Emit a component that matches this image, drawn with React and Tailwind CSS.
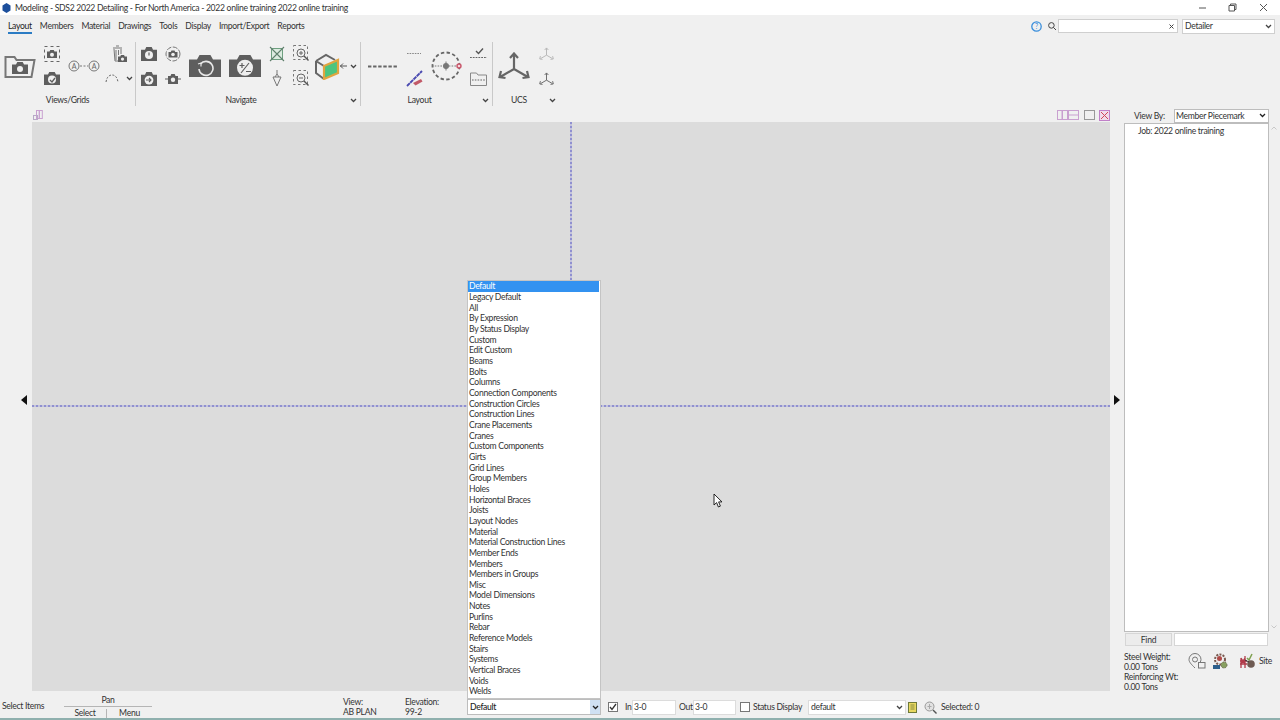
import React from "react";

const G = "#5e5e5e";
const items = ["Default","Legacy Default","All","By Expression","By Status Display","Custom","Edit Custom","Beams","Bolts","Columns","Connection Components","Construction Circles","Construction Lines","Crane Placements","Cranes","Custom Components","Girts","Grid Lines","Group Members","Holes","Horizontal Braces","Joists","Layout Nodes","Material","Material Construction Lines","Member Ends","Members","Members in Groups","Misc","Model Dimensions","Notes","Purlins","Rebar","Reference Models","Stairs","Systems","Vertical Braces","Voids","Welds"];
const tabs = ["Members","Material","Drawings","Tools","Display","Import/Export","Reports"];

const S = ({ w, h, children, className = "" }) => (
  <svg width={w} height={h} viewBox={`0 0 ${w} ${h}`} className={`block shrink-0 ${className}`} fill="none">{children}</svg>
);
const Chev = ({ c = "#444" }) => (
  <S w={7} h={5}><path d="M1 1l2.5 2.5L6 1" stroke={c} strokeWidth="1.3" /></S>
);
const CamBody = ({ x = 0, y = 0, w = 16, h = 12, r = 3, inner = "#f0f0f0" }) => (
  <g>
    <path d={`M${x} ${y + h * .2}h${w * .25}l${w * .08} ${-h * .2}h${w * .34}l${w * .08} ${h * .2}h${w * .25}v${h * .8}h${-w}z`} fill={G} />
    {inner && <circle cx={x + w / 2} cy={y + h * .58} r={r} fill={inner} />}
  </g>
);
const FolderCam = () => (
  <S w={32} h={26}>
    <path d="M1.5 24V4h9l2 3h18l-3 17z" stroke="#777" strokeWidth="2" fill="#f0f0f0" />
    <CamBody x={8} y={9} w={16} h={12} r={3} />
  </S>
);
const DashBox = ({ w = 16, h = 16 }) => <rect x=".5" y=".5" width={w - 1} height={h - 1} stroke="#666" strokeDasharray="3 3" />;
const DashCam = () => (
  <S w={16} h={16}><DashBox /><CamBody x={3} y={4} w={10} h={8} r={2} /></S>
);
const CheckCam = () => (
  <S w={16} h={13}><CamBody w={16} h={13} r={4} /><path d="M6 8l2 2 3-4" stroke={G} strokeWidth="1.3" /></S>
);
const AA = () => (
  <S w={32} h={12}>
    <circle cx="6" cy="6" r="5" stroke="#777" />
    <circle cx="26" cy="6" r="5" stroke="#777" />
    <path d="M12 6h8" stroke="#777" strokeDasharray="2 1.5" />
    <text x="6" y="8.5" textAnchor="middle" fontSize="7" fill="#666">A</text>
    <text x="26" y="8.5" textAnchor="middle" fontSize="7" fill="#666">A</text>
  </S>
);
const TrashCam = () => (
  <S w={16} h={18}>
    <path d="M2 3h9M5 1h3M3 4l1 12h3M10 4v5M5 5v10M7.5 5v5" stroke="#777" />
    <CamBody x={7} y={10} w={9} h={7} r={1.6} />
  </S>
);
const Curve = () => (
  <S w={14} h={9}><path d="M1 8C2 2 5 1 7 1s5 1 6 7" stroke="#666" strokeDasharray="2 1.5" /></S>
);
const TimerCam = () => (
  <S w={16} h={14}><CamBody w={16} h={14} r={4} /><path d="M8 5.5v3" stroke={G} strokeWidth="1.2" /></S>
);
const RingCam = () => (
  <S w={16} h={16}>
    <circle cx="8" cy="8" r="7" stroke="#777" strokeDasharray="5 1.5" />
    <CamBody x={3.5} y={4.5} w={9} h={7} r={1.8} />
  </S>
);
const ArrowCam = () => (
  <S w={16} h={14}><CamBody w={16} h={14} r={4.4} /><path d="M5 8h5M8 6l2 2-2 2" stroke={G} strokeWidth="1.1" /></S>
);
const SmallCam = () => (
  <S w={16} h={10}>
    <path d="M0 5h3M13 5h3" stroke={G} strokeWidth="1.2" />
    <CamBody x={3} y={0} w={10} h={10} r={2.2} />
  </S>
);
const BigCamR = () => (
  <S w={32} h={22}>
    <CamBody w={32} h={22} inner={null} />
    <path d="M11.5 9a7 7 0 1 1-1.5 5" stroke="#e8e8e8" strokeWidth="1.6" />
    <path d="M9 9l3-1v3.4" stroke="#e8e8e8" strokeWidth="1.2" />
  </S>
);
const BigCamP = () => (
  <S w={32} h={22}>
    <CamBody w={32} h={22} r={8} inner="#eeeeee" />
    <path d="M10.5 10.5h5M13 8v5M17 16.500h5M12 18l8-10" stroke={G} strokeWidth="1.2" />
  </S>
);
const GreenX = () => (
  <S w={16} h={16}>
    <rect x="2.5" y="2.5" width="11" height="11" stroke="#6d9f7f" fill="#dcebe0" />
    <path d="M1 1l14 14M15 1L1 15" stroke="#5f7f6c" strokeWidth="1.1" />
  </S>
);
const Plumb = () => (
  <S w={10} h={17}><path d="M5 0v4M1 7h8L5 16zM3 7l2-3 2 3" stroke="#777" /></S>
);
const Zoom = ({ plus }) => (
  <S w={17} h={17}>
    <rect x=".5" y=".5" width="14" height="14" stroke="#777" strokeDasharray="2.5 2.5" />
    <circle cx="8" cy="8" r="4" stroke="#666" fill="#f0f0f0" />
    <path d="M11 11l4.500 4.500" stroke="#555" strokeWidth="1.4" />
    <path d={plus ? "M6 8h4M8 6v4" : "M6 8h4"} stroke="#666" />
  </S>
);
const Cube = () => (
  <S w={26} h={27}>
    <path d="M2 8L12 2l9 5M2 8v12l8 6M2 8l8 5" stroke="#666" strokeWidth="2" />
    <path d="M10 13l14-6v13l-14 6z" fill="#4cc57f" stroke="#e0a540" strokeWidth="2.2" />
  </S>
);
const Dashes = () => <S w={29} h={3}><path d="M0 1.500h29" stroke="#666" strokeWidth="2.200" strokeDasharray="3.400 1.700" /></S>;
const ShortDash = () => <S w={14} h={3}><path d="M0 1.500h14" stroke="#888" strokeWidth="1.100" strokeDasharray="1.600 1" /></S>;
const Pencil = () => (
  <S w={17} h={17}>
    <path d="M1 16L16 1" stroke="#4a4ab0" strokeWidth="1.900" strokeDasharray="4 .6" />
    <path d="M7 13l8-4 1.500 2.500-7 4z" fill="#c25a68" />
  </S>
);
const Circle = () => (
  <S w={32} h={30}>
    <circle cx="15" cy="15" r="13.500" stroke="#666" strokeWidth="1.800" strokeDasharray="3.400 2.400" />
    <path d="M1 15h26" stroke="#777" strokeDasharray="1.600 1.200" />
    <circle cx="15" cy="15" r="3" fill="#777" />
    <path d="M15 10.500v9" stroke="#777" />
    <circle cx="28" cy="15" r="2" stroke="#c9566a" strokeWidth="1.400" fill="#f5d8de" />
  </S>
);
const CheckDash = () => (
  <S w={17} h={13}>
    <path d="M6 4l2.500 2.500L13 1.500" stroke="#555" strokeWidth="1.400" />
    <path d="M0 10.500h17" stroke="#666" strokeWidth="1.100" strokeDasharray="1.800 1" />
  </S>
);
const FolderDash = () => (
  <S w={17} h={14}>
    <path d="M.5 13.500V1h6l1.500 2h8.500v10.500z" stroke="#888" />
    <path d="M2 8h13" stroke="#666" strokeDasharray="1.600 1.200" />
  </S>
);
const Axes = ({ w = 32, h = 29, c = "#666", sw = 2.2 }) => (
  <svg width={w} height={h} viewBox="0 0 32 29" className="block shrink-0" fill="none">
    <path d="M16 17V2M16 17L3 24.500M16 17l13 7.500M12 6l4-4.500L20 6M3 19l-1.500 6 6 1M29 19l1.500 6-6 1" stroke={c} strokeWidth={sw} />
  </svg>
);
const Col = ({ w, ml, children }) => (
  <div className={`flex flex-col items-center justify-between h-[43px] ${w} ${ml}`}>
    {React.Children.map(children, (c) => <div className="h-[18px] flex items-center">{c}</div>)}
  </div>
);
const Sep = () => <div className="w-px h-[64px] bg-[#c9c9c9] mt-[5px] shrink-0" />;
const Group = ({ w, label, chev, pad = "", children }) => (
  <div className={`flex flex-col shrink-0 ${w}`}>
    <div className={`flex items-center h-[44px] mt-[7px] ${pad}`}>{children}</div>
    <div className="flex items-center h-[14px] mt-[5px]">
      <div className="flex-1 text-center">{label}</div>
      {chev && <div className="w-[14px] flex justify-center"><Chev /></div>}
    </div>
  </div>
);
const Check = ({ on }) => (
  <div className="w-[10px] h-[10px] border border-[#777] bg-white flex items-center justify-center shrink-0">
    {on && <S w={8} h={8}><path d="M1 4l2 2.500L7 1" stroke="#333" strokeWidth="1.300" /></S>}
  </div>
);
const ViewSwitch = () => (
  <div className="flex items-center">
    <S w={11} h={10}><rect x=".5" y=".5" width="4.500" height="9" stroke="#c9a0d0" /><rect x="5.500" y=".5" width="5" height="9" stroke="#c9a0d0" /></S>
    <S w={11} h={10}><rect x=".5" y=".5" width="10" height="9" stroke="#c9a0d0" /><path d="M0 5h11" stroke="#c9a0d0" /></S>
    <S w={11} h={10} className="ml-[5px]"><rect x=".5" y=".5" width="10" height="9" stroke="#999" /></S>
    <S w={11} h={11} className="ml-[4px]"><rect x=".5" y=".5" width="10" height="10" stroke="#c080c8" fill="#f0dcec" /><path d="M2 2l7 7M9 2l-7 7" stroke="#d04858" /></S>
  </div>
);
const Tri = ({ right }) => (
  <S w={6} h={10}><path d={right ? "M0 0l6 5-6 5z" : "M6 0L0 5l6 5z"} fill="#111" /></S>
);
const PinBox = () => (
  <S w={18} h={17}>
    <path d="M7 15C3 11 1 9 1 6.500a6 6 0 0 1 12 0c0 1-.3 2-1 3" stroke="#777" />
    <circle cx="7" cy="6.500" r="2.500" stroke="#777" />
    <rect x="10.500" y="9.500" width="6.500" height="5.500" stroke="#777" fill="#f0f0f0" />
  </S>
);
const GearPerson = () => (
  <S w={16} h={17}>
    <circle cx="8" cy="6.500" r="5" stroke="#7a5a50" strokeWidth="2" strokeDasharray="2 1.200" />
    <circle cx="7.500" cy="5.500" r="2.500" fill="#b04a48" />
    <path d="M1 16v-4h7v4z" fill="#2d5f8c" />
    <circle cx="12" cy="12" r="3" fill="#88a060" stroke="#6a6a50" strokeDasharray="1.500 1" />
  </S>
);
const SiteIcon = () => (
  <S w={17} h={17}>
    <path d="M2 15V5M6 15V3M1 8h7M1 11h7M2 5l4 6M6 5l-4 6" stroke="#b03a4a" strokeWidth="1.300" />
    <path d="M8 5l2 2 3-6" stroke="#7ea050" strokeWidth="1.500" />
    <circle cx="12" cy="11" r="3.800" fill="#6e5a52" />
    <path d="M6 7l4 2" stroke="#333" />
  </S>
);

export default function App() {
  return (
    <div className="relative w-[1280px] h-[720px] overflow-hidden flex flex-col bg-[#f0f0f0] text-[#333] text-[8.600px] tracking-[-0.3px] leading-none font-['Lato',sans-serif]">
      {/* title bar */}
      <div className="h-[15px] shrink-0 bg-white flex items-center">
        <S w={9} h={10} className="ml-[2px]"><path d="M4.500 0l4 2.400v5L4.500 10 .5 7.400v-5z" fill="#1c4f9c" /></S>
        <div className="ml-[4px] pt-[2px] text-[#333]">Modeling - SDS2 2022 Detailing - For North America - 2022 online training 2022 online training</div>
        <div className="ml-auto flex items-center">
          <S w={9} h={9}><path d="M1 5h7" stroke="#555" /></S>
          <S w={9} h={9} className="ml-[21px]"><path d="M2.500 2.500V1h5.500v5.500H6.500M1 2.500h5.500V8H1z" stroke="#555" /></S>
          <S w={9} h={9} className="ml-[22px] mr-[12px]"><path d="M1 1l7 7M8 1L1 8" stroke="#555" /></S>
        </div>
      </div>
      {/* tabs */}
      <div className="h-[22px] shrink-0 flex items-center">
        <div className="ml-[8px] flex items-center gap-[8px] h-full">
          <div className="relative h-full flex items-center pt-px text-[#222]">
            Layout
            <div className="absolute left-0 right-0 bottom-[3px] h-[2px] bg-[#2b7cc4]" />
          </div>
          {tabs.map((t) => <div key={t} className="pt-px">{t}</div>)}
        </div>
        <div className="ml-auto flex items-center">
          <S w={11} h={11} className="mr-[6px]"><circle cx="5.500" cy="5.500" r="4.700" stroke="#3a8edb" strokeWidth="1.300" /><text x="5.500" y="8" textAnchor="middle" fontSize="7" fill="#3a8edb">?</text></S>
          <S w={8} h={8} className="mr-[2px]"><circle cx="3.400" cy="3.400" r="2.800" stroke="#444" /><path d="M5.500 5.500L8 8" stroke="#444" /></S>
          <div className="w-[120px] h-[14px] bg-white border border-[#cfcfcf] flex items-center justify-end pr-[3px]">
            <S w={5} h={5}><path d="M.5.5l4 4M4.500.5l-4 4" stroke="#444" /></S>
          </div>
          <div className="w-[93px] h-[15px] ml-[4px] mr-[5px] bg-white border border-[#cfcfcf] flex items-center justify-between pl-[2px] pr-[2px]">
            <span className="pt-px">Detailer</span><Chev />
          </div>
        </div>
      </div>
      {/* ribbon */}
      <div className="h-[71px] shrink-0 flex">
        <Group w="w-[135px]" label="Views/Grids" pad="pl-[4px]">
          <FolderCam />
          <Col w="w-[16px]" ml="ml-[8px]"><DashCam /><CheckCam /></Col>
          <div className="ml-[8px]"><AA /></div>
          <Col w="w-[26px]" ml="ml-[6px]">
            <TrashCam />
            <div className="flex items-center gap-[7px]"><Curve /><Chev /></div>
          </Col>
        </Group>
        <Sep />
        <Group w="w-[224px]" label="Navigate" chev pad="pl-[5px]">
          <Col w="w-[16px]" ml=""><TimerCam /><ArrowCam /></Col>
          <Col w="w-[16px]" ml="ml-[8px]"><RingCam /><SmallCam /></Col>
          <div className="ml-[8px]"><BigCamR /></div>
          <div className="ml-[8px]"><BigCamP /></div>
          <Col w="w-[16px]" ml="ml-[8px]"><GreenX /><Plumb /></Col>
          <Col w="w-[17px]" ml="ml-[8px]"><Zoom plus /><Zoom /></Col>
          <div className="ml-[4px]"><Cube /></div>
          <S w={7} h={6}><path d="M0 3h7M3 .5L.5 3 3 5.500" stroke="#555" /></S>
          <div className="ml-[3px]"><Chev /></div>
        </Group>
        <Sep />
        <Group w="w-[131px]" label="Layout" chev pad="pl-[7px]">
          <Dashes />
          <Col w="w-[22px]" ml="ml-[6px]"><ShortDash /><Pencil /></Col>
          <div className="ml-[6px]"><Circle /></div>
          <Col w="w-[18px]" ml="ml-[6px]"><CheckDash /><FolderDash /></Col>
        </Group>
        <Sep />
        <Group w="w-[66px]" label="UCS" chev pad="pl-[5px]">
          <Axes />
          <Col w="w-[16px]" ml="ml-[8px]">
            <Axes w={15} h={14} c="#b5b5b5" sw={2} />
            <Axes w={15} h={14} c="#666" sw={2} />
          </Col>
        </Group>
      </div>
      {/* work area */}
      <div className="flex-1 min-h-0 flex">
        <div className="w-[32px] shrink-0 flex items-center justify-end pr-[5px]"><Tri /></div>
        <div className="w-[1078px] shrink-0 flex flex-col">
          <div className="h-[14px] shrink-0 flex items-center justify-between">
            <S w={10} h={10} className="ml-px"><rect x="3.500" y=".5" width="2.800" height="8" stroke="#c9a0d0" /><rect x="6.300" y=".5" width="3" height="8" stroke="#c9a0d0" /><rect x=".5" y="5.500" width="4" height="4" stroke="#b8a8c8" /></S>
            <ViewSwitch />
          </div>
          <div className="relative flex-1 bg-[#dcdcdc]">
            <div className="absolute left-0 right-0 top-[283px] h-[2px] bg-[repeating-linear-gradient(90deg,#9090d0_0,#9090d0_2px,#c4c4dc_2px,#c4c4dc_4px)]" />
            <div className="absolute top-0 h-[283px] left-[538px] w-[2px] bg-[repeating-linear-gradient(180deg,#9090d0_0,#9090d0_2px,#c4c4dc_2px,#c4c4dc_4px)]" />
            <svg width="12" height="16" viewBox="0 0 12 16" className="absolute left-[681px] top-[371px]">
              <path d="M1 1v11l2.600-2.400L5.400 14l2-.9-1.800-4.200H9z" fill="#fff" stroke="#111" strokeWidth=".9" />
            </svg>
          </div>
        </div>
        <div className="w-[170px] shrink-0 flex">
          <div className="w-[7px] flex items-center pl-[4px]"><Tri right /></div>
          <div className="flex-1 flex flex-col pl-[7px]">
            <div className="h-[15px] shrink-0 flex items-center">
              <span className="ml-[10px] w-[40px] pt-px">View By:</span>
              <div className="w-[95px] h-[14px] bg-white border border-[#bdbdbd] flex items-center justify-between pl-[1px] pr-[2px]">
                <span className="pt-px">Member Piecemark</span><Chev c="#222" />
              </div>
            </div>
            <div className="flex shrink-0">
              <div className="w-[145px] h-[509px] bg-white border border-[#bdbdbd] pl-[13px] pt-[3px]">Job: 2022 online training</div>
              <div className="w-[10px] h-[509px] flex flex-col items-center justify-between py-[3px]">
                <svg width="6" height="4" viewBox="0 0 6 4" fill="none"><path d="M.5 3.500L3 1l2.500 2.500" stroke="#c8c8c8" /></svg>
                <svg width="6" height="4" viewBox="0 0 6 4" fill="none"><path d="M.5.5L3 3 5.500.5" stroke="#c8c8c8" /></svg>
              </div>
            </div>
            <div className="flex shrink-0 mt-px">
              <div className="w-[47px] h-[13px] ml-px pt-px bg-[#ececec] border border-[#d6d6d6] flex items-center justify-center">Find</div>
              <div className="w-[94px] h-[13px] ml-[2px] bg-white border border-[#d6d6d6]" />
            </div>
            <div className="flex items-center mt-[6px]">
              <div className="w-[64px] leading-[10px]">
                <div>Steel Weight:</div>
                <div>0.00 Tons</div>
                <div>Reinforcing Wt:</div>
                <div>0.00 Tons</div>
              </div>
              <div className="flex items-center mb-[22px]">
                <PinBox />
                <div className="ml-[6px]"><GearPerson /></div>
                <div className="ml-[11px]"><SiteIcon /></div>
                <span className="ml-[3px]">Site</span>
              </div>
            </div>
          </div>
        </div>
      </div>
      {/* status bar */}
      <div className="h-[29px] shrink-0 flex border-b-[2px] border-[#8fb0ae]">
        <div className="w-[64px] pl-[2px] flex items-center pt-[4px]">Select Items</div>
        <div className="w-[88px] shrink-0 flex flex-col">
          <div className="h-[16px] border-b border-[#b5b5b5] flex items-center justify-center pt-[3px]">Pan</div>
          <div className="flex-1 flex pt-[2px]">
            <div className="w-[43px] border-r border-[#b5b5b5] flex items-center justify-center">Select</div>
            <div className="flex-1 flex items-center justify-center">Menu</div>
          </div>
        </div>
        <div className="ml-[191px] w-[62px] pt-[7px] leading-[9.500px]">
          <div>View:</div><div>AB PLAN</div>
        </div>
        <div className="w-[62px] pt-[7px] leading-[9.500px]">
          <div>Elevation:</div><div>99-2</div>
        </div>
        <div className="relative w-[134px] h-[16px] mt-[8px] bg-white border border-[#bdbdbd] flex items-center pl-px text-[#222] font-medium">
          <span className="pl-px">Default</span>
          <div className="ml-auto w-[10px] h-full bg-[#cfe0f3] flex items-center justify-center"><Chev c="#222" /></div>
          <div className="absolute left-[-1px] bottom-full w-[134px] mb-px bg-white border border-[#c4c4c4] pb-px font-normal">
            {items.map((t, i) => (
              <div key={t} className={`h-[10.660px] flex items-center pl-px mr-px whitespace-nowrap ${i === 0 ? "bg-[#3392f0] text-white" : "text-[#333]"}`}>{t}</div>
            ))}
          </div>
        </div>
        <div className="flex items-center mt-[8px] h-[16px]">
          <div className="ml-[7px]"><Check on /></div>
          <span className="ml-[7px] w-[7px]">In</span>
          <div className="w-[44px] h-[15px] bg-white border border-[#dcdcdc] flex items-center pl-px">3-0</div>
          <span className="ml-[3px] w-[14px]">Out</span>
          <div className="w-[43px] h-[15px] bg-white border border-[#dcdcdc] flex items-center pl-px">3-0</div>
          <div className="ml-[4px]"><Check /></div>
          <span className="ml-[3px] w-[55px] whitespace-nowrap">Status Display</span>
          <div className="w-[98px] h-[15px] bg-white border border-[#dcdcdc] flex items-center justify-between pl-[2px] pr-[2px]">
            <span>default</span><Chev />
          </div>
          <S w={9} h={11} className="ml-[2px]"><rect x=".5" y=".5" width="8" height="10" fill="#e8d860" stroke="#6f7a3a" /><path d="M2.500 3h4M2.500 5h4M2.500 7h4" stroke="#6f7a3a" strokeWidth=".8" /></S>
          <S w={13} h={13} className="ml-[7px]"><circle cx="5.500" cy="5.500" r="4.500" stroke="#999" fill="#e2e2e2" /><path d="M3.500 5.500h4M5.500 3v5" stroke="#aaa" /><path d="M9 9l3.500 3.500" stroke="#555" strokeWidth="1.400" /></S>
          <span className="ml-[4px]">Selected: 0</span>
        </div>
      </div>
    </div>
  );
}
